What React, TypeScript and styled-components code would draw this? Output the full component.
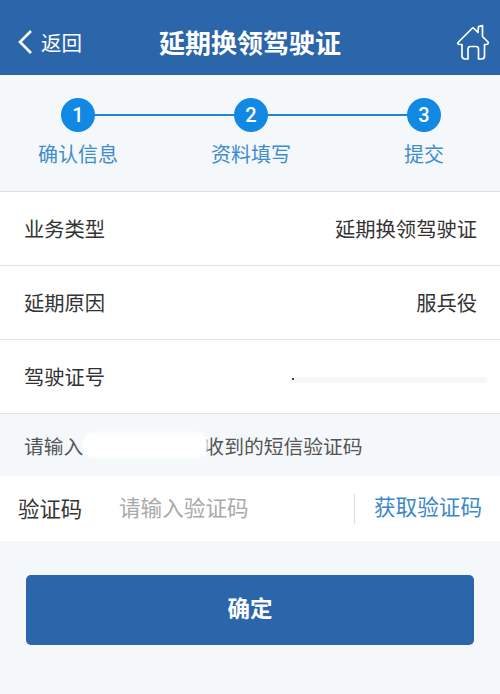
import React from "react";
import styled, { createGlobalStyle } from "styled-components";

const FONT = `"Liberation Sans", "Noto Sans CJK SC", sans-serif`;

const GlobalStyle = createGlobalStyle`
  html, body {
    margin: 0;
    padding: 0;
    background: #f4f8fa;
    font-family: ${FONT};
  }
  * {
    box-sizing: border-box;
  }
`;

const steps = [
  { no: 1, label: "确认信息" },
  { no: 2, label: "资料填写" },
  { no: 3, label: "提交" },
];

const App = () => {
  return (
    <Page>
      <GlobalStyle />
      <Header>
        <BackLink>
          <svg width="16" height="26" viewBox="0 0 16 26" fill="none">
            <path d="M14 2 L3 13 L14 24" stroke="#fff" strokeWidth="2.6" />
          </svg>
          <BackText>返回</BackText>
        </BackLink>
        <Title>延期换领驾驶证</Title>
        <HomeIcon width="34" height="38" viewBox="0 0 34 38" fill="none">
          <path
            d="M2 19.5 L16 5.5 Q17 4.5 18 5.5 L22 9.5 L22.5 3.5 L26.5 2.5 L26.5 13.5 L32 19 Q33 21 30.5 21.5 L28.5 21.5 L28.5 33 Q28.5 36 25.5 36 L22.5 36 L22.5 26 Q22.5 23.5 20 23.5 L14.5 23.5 Q12 23.5 12 26 L12 36 L9 36 Q6 36 6 33 L6 21.5 L3.5 21.5 Q1 21 2 19.5 Z"
            stroke="#fff"
            strokeWidth="1.7"
            strokeLinejoin="round"
          />
        </HomeIcon>
      </Header>

      <Steps>
        <StepLine />
        {steps.map((s) => (
          <Step key={s.no}>
            <StepNo>{s.no}</StepNo>
            <StepLabel>{s.label}</StepLabel>
          </Step>
        ))}
      </Steps>

      <InfoList>
        <InfoRow>
          <span>业务类型</span>
          <span>延期换领驾驶证</span>
        </InfoRow>
        <InfoRow>
          <span>延期原因</span>
          <span>服兵役</span>
        </InfoRow>
        <InfoRow>
          <span>驾驶证号</span>
          <Masked />
        </InfoRow>
      </InfoList>

      <Hint>
        请输入<HintMask />收到的短信验证码
      </Hint>

      <CodeRow>
        <CodeLabel>验证码</CodeLabel>
        <CodeInput placeholder="请输入验证码" />
        <GetCode>获取验证码</GetCode>
      </CodeRow>

      <Submit>确定</Submit>
    </Page>
  );
};

export default App;

const Page = styled.div`
  width: 500px;
  height: 694px;
  overflow: hidden;
  background: #f4f8fa;
`;

const Header = styled.header`
  height: 75px;
  background: #2b65aa;
  display: flex;
  align-items: center;
  justify-content: space-between;
  padding: 8px 10px 0 17px;
  position: relative;
  color: #fff;
`;

const BackLink = styled.div`
  display: flex;
  align-items: center;
  gap: 8px;
`;

const BackText = styled.span`
  font-size: 20.5px;
`;

const Title = styled.h1`
  position: absolute;
  left: 0;
  right: 0;
  margin: 0;
  text-align: center;
  font-size: 26px;
  font-weight: 700;
  pointer-events: none;
`;

const HomeIcon = styled.svg`
  display: block;
`;

const Steps = styled.div`
  height: 117px;
  padding: 23px 28px 0 30px;
  display: flex;
  justify-content: space-between;
  position: relative;
  border-bottom: 1px solid #d9dfe2;
`;

const StepLine = styled.div`
  position: absolute;
  top: 39px;
  left: 78px;
  width: 346px;
  height: 2px;
  background: #1a87dc;
`;

const Step = styled.div`
  width: 96px;
  display: flex;
  flex-direction: column;
  align-items: center;
  position: relative;
`;

const StepNo = styled.div`
  width: 34px;
  height: 34px;
  border-radius: 50%;
  background: #1088e4;
  color: #fff;
  font-size: 20px;
  display: flex;
  align-items: center;
  justify-content: center;
  font-family: Roboto, sans-serif;
  font-weight: 500;
`;

const StepLabel = styled.div`
  margin-top: 10px;
  font-size: 20px;
  line-height: 26px;
  color: #3f8cca;
`;

const InfoList = styled.div`
  background: #fff;
`;

const InfoRow = styled.div`
  height: 74px;
  padding: 0 23px 2px 24px;
  display: flex;
  align-items: center;
  justify-content: space-between;
  font-size: 20.3px;
  color: #333;
  border-bottom: 1px solid #dfe4e6;
`;

const Masked = styled.div`
  width: 197px;
  height: 6px;
  margin-right: -10px;
  margin-top: 8px;
  background: #f7f7f7;
  border-radius: 3px;
  position: relative;

  &::before {
    content: "";
    position: absolute;
    left: 2px;
    top: 1px;
    width: 2px;
    height: 2px;
    background: #444;
  }
`;

const Hint = styled.div`
  height: 62px;
  padding: 0 24px;
  display: flex;
  align-items: center;
  font-size: 19.8px;
  color: #555;
`;

const HintMask = styled.div`
  width: 125px;
  height: 26px;
  margin-right: -4px;
  position: relative;
  background: #fff;
  border-radius: 12px;
  filter: blur(1.5px);
`;

const CodeRow = styled.div`
  height: 65px;
  background: #fff;
  display: flex;
  align-items: center;
  padding: 0 18px 0 18px;
`;

const CodeLabel = styled.div`
  width: 101px;
  padding-bottom: 3px;
  font-size: 21.4px;
  color: #333;
`;

const CodeInput = styled.input`
  flex: 1;
  min-width: 0;
  border: none;
  outline: none;
  padding: 0;
  font-size: 21.6px;
  font-family: ${FONT};
  &::placeholder {
    color: #a9a9a9;
  }
`;

const GetCode = styled.div`
  height: 30px;
  padding-left: 19px;
  border-left: 1px solid #d9dcde;
  font-size: 21.6px;
  line-height: 28px;
  color: #3c87c9;
`;

const Submit = styled.button`
  display: block;
  width: 448px;
  height: 70px;
  margin: 34px 0 0 26px;
  padding: 0 0 6px;
  border: none;
  border-radius: 5px;
  background: #2b65aa;
  color: #fff;
  font-size: 22.5px;
  font-weight: 700;
  font-family: ${FONT};
`;
